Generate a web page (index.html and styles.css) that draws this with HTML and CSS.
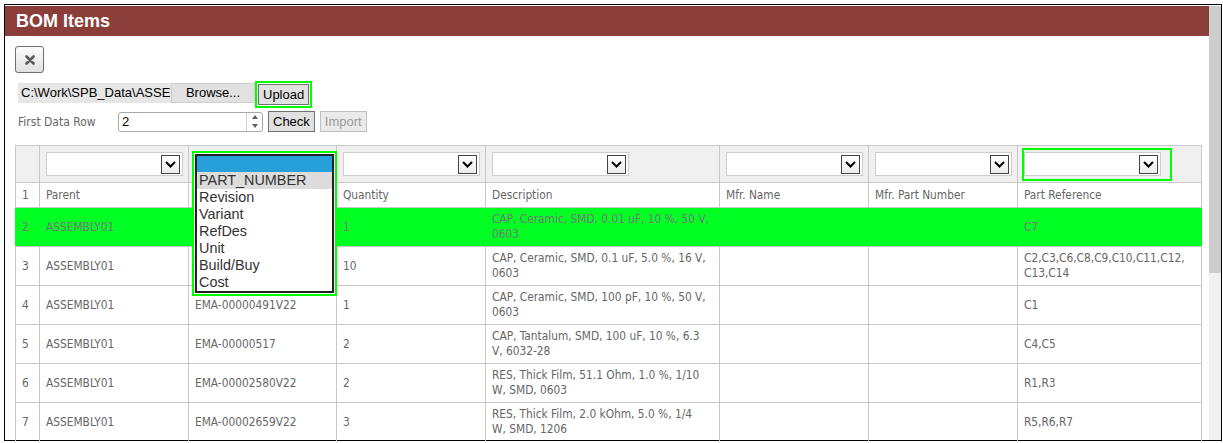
FILE: index.html
```html
<!DOCTYPE html>
<html lang="en">
<head>
  <meta charset="UTF-8">
  <title>BOM Items</title>
  <link rel="stylesheet" href="styles.css">
</head>
<body>
  <div class="frame">
    <div class="pane">
      <div class="content">
        <h1 class="title">BOM Items</h1>
        <div class="panel">
          <button class="close-btn" title="Close">
            <svg width="10" height="10" viewBox="0 0 10 10"><path d="M1.5 1.5 L8.5 8.5 M8.5 1.5 L1.5 8.5" stroke="#5a5a5a" stroke-width="2.6" stroke-linecap="round"/></svg>
          </button>

          <div class="file-row">
            <span class="file-path">C:\Work\SPB_Data\ASSEMBLY01.xlsx</span>
            <span class="browse-btn">Browse...</span>
            <span class="mark"><button class="win-btn upload-btn">Upload</button></span>
          </div>

          <div class="setting-row">
            <label class="setting-label">First Data Row</label>
            <div class="spin-input">
              <span class="spin-value">2</span>
              <span class="spin">
                <span class="spin-up"></span>
                <span class="spin-down"></span>
              </span>
            </div>
            <button class="win-btn">Check</button>
            <button class="win-btn" disabled>Import</button>
          </div>

          <table class="grid">
            <colgroup>
              <col class="c-num">
              <col class="c-std">
              <col class="c-part">
              <col class="c-std">
              <col class="c-desc">
              <col class="c-std">
              <col class="c-std">
              <col class="c-ref">
            </colgroup>
            <tr class="filter-row">
              <td></td>
              <td><div class="pick"><span class="pick-arrow"><svg width="11" height="7" viewBox="0 0 11 7"><path d="M1 1 L5.5 5.5 L10 1" fill="none" stroke="#000" stroke-width="2"/></svg></span></div></td>
              <td>
                <div class="pick">
                  <span class="pick-arrow"><svg width="11" height="7" viewBox="0 0 11 7"><path d="M1 1 L5.5 5.5 L10 1" fill="none" stroke="#000" stroke-width="2"/></svg></span>
                  <div class="dropdown">
                    <div class="listbox">
                      <div class="opt opt-hover"></div>
                      <div class="opt opt-current">PART_NUMBER</div>
                      <div class="opt">Revision</div>
                      <div class="opt">Variant</div>
                      <div class="opt">RefDes</div>
                      <div class="opt">Unit</div>
                      <div class="opt">Build/Buy</div>
                      <div class="opt">Cost</div>
                    </div>
                  </div>
                </div>
              </td>
              <td><div class="pick"><span class="pick-arrow"><svg width="11" height="7" viewBox="0 0 11 7"><path d="M1 1 L5.5 5.5 L10 1" fill="none" stroke="#000" stroke-width="2"/></svg></span></div></td>
              <td><div class="pick"><span class="pick-arrow"><svg width="11" height="7" viewBox="0 0 11 7"><path d="M1 1 L5.5 5.5 L10 1" fill="none" stroke="#000" stroke-width="2"/></svg></span></div></td>
              <td><div class="pick"><span class="pick-arrow"><svg width="11" height="7" viewBox="0 0 11 7"><path d="M1 1 L5.5 5.5 L10 1" fill="none" stroke="#000" stroke-width="2"/></svg></span></div></td>
              <td><div class="pick"><span class="pick-arrow"><svg width="11" height="7" viewBox="0 0 11 7"><path d="M1 1 L5.5 5.5 L10 1" fill="none" stroke="#000" stroke-width="2"/></svg></span></div></td>
              <td>
                <div class="pick">
                  <span class="pick-arrow"><svg width="11" height="7" viewBox="0 0 11 7"><path d="M1 1 L5.5 5.5 L10 1" fill="none" stroke="#000" stroke-width="2"/></svg></span>
                  <span class="pick-mark"></span>
                </div>
              </td>
            </tr>
            <tr class="head-row">
              <td>1</td>
              <td>Parent</td>
              <td>Part Number</td>
              <td>Quantity</td>
              <td>Description</td>
              <td>Mfr. Name</td>
              <td>Mfr. Part Number</td>
              <td>Part Reference</td>
            </tr>
            <tr class="active-row">
              <td>2</td>
              <td>ASSEMBLY01</td>
              <td>EMA-00000488V22</td>
              <td>1</td>
              <td>CAP, Ceramic, SMD, 0.01 uF, 10 %, 50 V, 0603</td>
              <td></td>
              <td></td>
              <td>C7</td>
            </tr>
            <tr>
              <td>3</td>
              <td>ASSEMBLY01</td>
              <td>EMA-00000489V22</td>
              <td>10</td>
              <td>CAP, Ceramic, SMD, 0.1 uF, 5.0 %, 16 V, 0603</td>
              <td></td>
              <td></td>
              <td>C2,C3,C6,C8,C9,C10,C11,C12,<br>C13,C14</td>
            </tr>
            <tr>
              <td>4</td>
              <td>ASSEMBLY01</td>
              <td>EMA-00000491V22</td>
              <td>1</td>
              <td>CAP, Ceramic, SMD, 100 pF, 10 %, 50 V, 0603</td>
              <td></td>
              <td></td>
              <td>C1</td>
            </tr>
            <tr>
              <td>5</td>
              <td>ASSEMBLY01</td>
              <td>EMA-00000517</td>
              <td>2</td>
              <td>CAP, Tantalum, SMD, 100 uF, 10 %, 6.3 V, 6032-28</td>
              <td></td>
              <td></td>
              <td>C4,C5</td>
            </tr>
            <tr>
              <td>6</td>
              <td>ASSEMBLY01</td>
              <td>EMA-00002580V22</td>
              <td>2</td>
              <td>RES, Thick Film, 51.1 Ohm, 1.0 %, 1/10 W, SMD, 0603</td>
              <td></td>
              <td></td>
              <td>R1,R3</td>
            </tr>
            <tr>
              <td>7</td>
              <td>ASSEMBLY01</td>
              <td>EMA-00002659V22</td>
              <td>3</td>
              <td>RES, Thick Film, 2.0 kOhm, 5.0 %, 1/4<br>W, SMD, 1206</td>
              <td></td>
              <td></td>
              <td>R5,R6,R7</td>
            </tr>
          </table>
        </div>
      </div>
      <div class="scrollbar"><div class="thumb"></div></div>
    </div>
  </div>
</body>
</html>
```

FILE: styles.css
```css
body {
  margin: 0;
  background-color: #fff;
  font-family: 'DejaVu Sans Condensed', 'DejaVu Sans', sans-serif;
  overflow: hidden;
}

.frame {
  margin: 4px 0 0 4px;
  width: 1218px;
  height: 437px;
  box-sizing: border-box;
  border: 1px solid #000;
  padding-top: 1px;
}

.pane {
  display: flex;
  height: 434px;
}

.content {
  flex: 1;
  min-width: 0;
}

.title {
  margin: 0;
  height: 30px;
  padding-left: 11px;
  background-color: #8b3e39;
  color: #fff;
  font: bold 18px/30px 'Liberation Sans', Arial, sans-serif;
}

.panel {
  padding: 10px 0 0 10px;
}

/* Close button */
.close-btn {
  display: flex;
  align-items: center;
  justify-content: center;
  width: 29px;
  height: 27px;
  padding: 0;
  border: 1px solid #707070;
  border-radius: 3px;
  background: linear-gradient(#fdfdfd, #e0e0e0);
}

/* File upload row */
.file-row {
  display: flex;
  align-items: flex-start;
  margin: 8px 0 0 3px;
  font: 13px 'Liberation Sans', Arial, sans-serif;
}

.file-path {
  width: 150px;
  height: 20px;
  margin-top: 2px;
  padding-left: 3px;
  line-height: 20px;
  background-color: #e6e6e6;
  white-space: nowrap;
  overflow: hidden;
}

.browse-btn {
  width: 84px;
  height: 20px;
  margin-top: 2px;
  box-sizing: border-box;
  border: 1px solid #cfcfcf;
  background-color: #e1e1e1;
  line-height: 18px;
  text-align: center;
}

.mark {
  display: block;
  border: 2px solid #00ff00;
  padding: 1px;
}

.win-btn {
  height: 21px;
  padding: 0 4px;
  border: 1px solid #707070;
  background-color: #e1e1e1;
  color: #000;
  font: 13px 'Liberation Sans', Arial, sans-serif;
}

.win-btn:disabled {
  border-color: #bfbfbf;
  background-color: #eaeaea;
  color: #9a9a9a;
}

.upload-btn {
  display: block;
  width: 51px;
}

/* First data row */
.setting-row {
  display: flex;
  align-items: center;
  gap: 5px;
  margin: 3px 0 0 3px;
}

.setting-label {
  width: 95px;
  color: #666;
  font-size: 12px;
}

.spin-input {
  display: flex;
  width: 145px;
  height: 20px;
  box-sizing: border-box;
  border: 1px solid #a9a9a9;
  border-radius: 3px;
  font: 13px 'Liberation Sans', Arial, sans-serif;
}

.spin-value {
  flex: 1;
  padding-left: 3px;
  line-height: 18px;
}

.spin {
  display: flex;
  flex-direction: column;
  width: 15px;
  border-left: 1px solid #cfcfcf;
}

.spin-up,
.spin-down {
  flex: 1;
  display: flex;
  align-items: center;
  justify-content: center;
}

.spin-up::before,
.spin-down::before {
  content: '';
  border-left: 3.5px solid transparent;
  border-right: 3.5px solid transparent;
}

.spin-up::before {
  border-bottom: 4px solid #606060;
}

.spin-down::before {
  border-top: 4px solid #606060;
}

/* Grid */
.grid {
  margin-top: 13px;
  width: 1186px;
  table-layout: fixed;
  border-collapse: collapse;
  color: #666;
  font-size: 11.8px;
  line-height: 15px;
}

.c-num { width: 24px; }
.c-std { width: 149px; }
.c-part { width: 148px; }
.c-desc { width: 234px; }
.c-ref { width: 184px; }

.grid td {
  border: 1px solid #c8c8c8;
  padding: 4px 9px 4px 6px;
  vertical-align: middle;
}

.filter-row td {
  background-color: #f0f0f0;
  padding: 6px 0 6px 6px;
}

.head-row td {
  padding-top: 5px;
  padding-bottom: 4px;
}

.active-row td {
  background-color: #00ff22;
  border-left-color: #00ff22;
  border-right-color: #00ff22;
  color: #777;
}

/* Column filter boxes */
.pick {
  position: relative;
  display: flex;
  justify-content: flex-end;
  align-items: flex-start;
  width: 137px;
  height: 24px;
  box-sizing: border-box;
  border: 1px solid #cdcdcd;
  background-color: #fff;
}

.pick-arrow {
  display: flex;
  align-items: center;
  justify-content: center;
  width: 19px;
  height: 19px;
  margin: 2px 2px 0 0;
  box-sizing: border-box;
  border: 1px solid #444;
  background: linear-gradient(#fff, #ececec);
}

.pick-mark {
  position: absolute;
  top: -5px;
  left: -3px;
  width: 150px;
  height: 33px;
  box-sizing: border-box;
  border: 2px solid #00ff00;
}

/* Open dropdown list */
.dropdown {
  position: absolute;
  top: -2px;
  left: -4px;
  border: 2px solid #00ff00;
  padding: 1px;
  background-color: #fff;
}

.listbox {
  width: 135px;
  border: 2px solid #222;
  background-color: #fff;
  color: #333;
  font: 14.4px/17px 'Liberation Sans', Arial, sans-serif;
}

.opt {
  height: 17px;
  padding-left: 2px;
  white-space: nowrap;
}

.opt-hover {
  height: 16px;
  background-color: #279fd9;
}

.opt-current {
  background-color: #dcdcdc;
}

/* Scrollbar */
.scrollbar {
  width: 12px;
  background-color: #f0f0f0;
}

.thumb {
  height: 267px;
  background-color: #cdcdcd;
}
```
